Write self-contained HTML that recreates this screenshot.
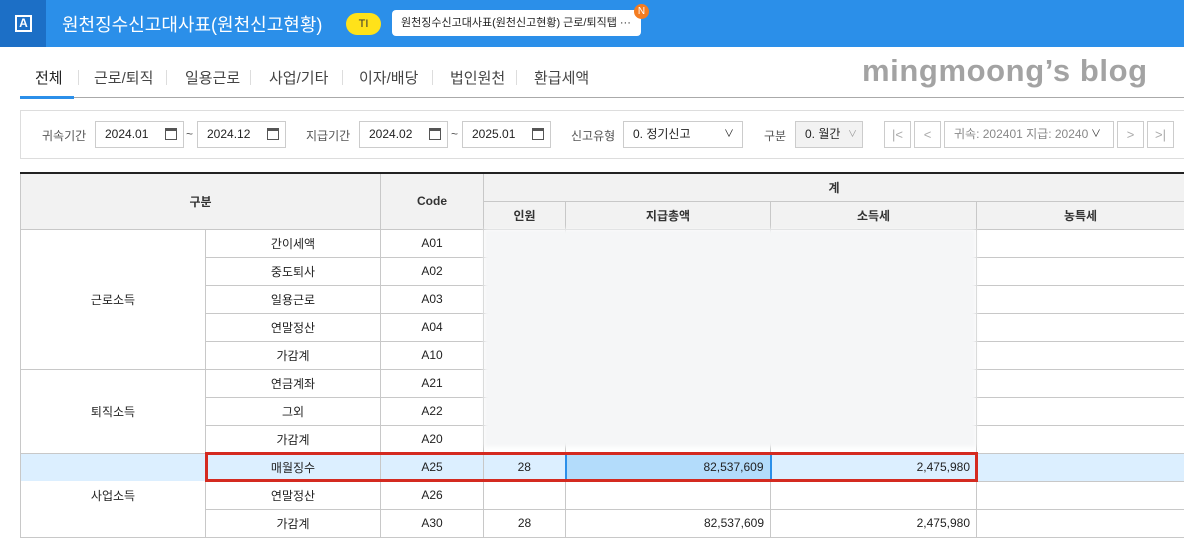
<!DOCTYPE html><html><head><meta charset="utf-8"><style>
*{box-sizing:border-box;margin:0;padding:0}
body{width:1184px;height:537px;overflow:hidden;background:#fff;font-family:"Liberation Sans","Noto Sans CJK KR",sans-serif;position:relative;color:#222}
.hdr{position:absolute;left:0;top:0;width:1184px;height:47px;background:#2b8fe9}
.sq{position:absolute;left:0;top:0;width:46px;height:47px;background:#1c6fc6}
.sq div{position:absolute;left:15px;top:15px;width:17px;height:17px;border:2px solid #fff;color:#fff;font-size:12px;line-height:13px;text-align:center;font-weight:bold}
.title{position:absolute;left:62px;top:11px;color:#fff;font-size:18px}
.ti{position:absolute;left:346px;top:13px;width:35px;height:22px;border-radius:11px;background:#ffe21a;font-size:11px;line-height:22px;text-align:center;color:#333}
.bub{position:absolute;left:392px;top:10px;width:249px;height:26px;background:#fff;border-radius:4px;font-size:11px;line-height:26px;padding-left:9px;color:#222}
.n{position:absolute;left:634px;top:4px;width:15px;height:15px;border-radius:50%;background:#f47c20;color:#fff;font-size:10px;text-align:center;line-height:15px}
.tabs{position:absolute;left:20px;top:60px;font-size:15px;color:#444}
.tabs span{position:absolute;top:7px;white-space:nowrap}
.sep{position:absolute;top:10px;width:1px;height:15px;background:#ddd}
.tline{position:absolute;left:20px;top:97px;width:1164px;height:1px;background:#aaa}
.tact{position:absolute;left:20px;top:96px;width:54px;height:3px;background:#2b8fe9}
.wm{position:absolute;left:862px;top:53px;font-size:31px;font-weight:bold;color:#a3a3a3;letter-spacing:0.6px}
.fb{position:absolute;left:20px;top:110px;width:1164px;height:49px;border:1px solid #ddd;border-right:none}
.lab{position:absolute;top:127px;font-size:12px;color:#555}
.inp{position:absolute;top:121px;height:27px;border:1px solid #ccc;font-size:12px;line-height:25px;padding-left:9px;color:#222;background:#fff}
.cal{position:absolute;right:6px;top:6px;width:12px;height:12px;border:1.5px solid #555;border-top-width:3px}
.nb{position:absolute;top:121px;width:27px;height:27px;border:1px solid #ccc;color:#aaa;font-size:13px;text-align:center;line-height:25px}
table{position:absolute;left:20px;top:172px;border-collapse:collapse;table-layout:fixed;width:1164px;border-top:2px solid #222;font-size:12px}
td,th{border:1px solid #c8c8c8;text-align:center;height:28px;padding:0}
th{background:#f2f2f2;font-weight:bold;font-size:12px;color:#333}
td.r{text-align:right;padding-right:6px}
tr.hl td{background:#dcefff}
.blur{position:absolute;left:484px;top:229px;width:492px;height:218px;background:#f5f6f7;filter:blur(2px)}
</style></head><body>
<div class="hdr"><div class="sq"><div>A</div></div><div class="title">원천징수신고대사표(원천신고현황)</div><div class="ti">TI</div><div class="bub">원천징수신고대사표(원천신고현황) 근로/퇴직탭 ···</div><div class="n">N</div></div>
<div class="tabs">
<span style="left:15px;color:#222">전체</span><div class="sep" style="left:58px"></div>
<span style="left:74px">근로/퇴직</span><div class="sep" style="left:146px"></div>
<span style="left:165px">일용근로</span><div class="sep" style="left:230px"></div>
<span style="left:249px">사업/기타</span><div class="sep" style="left:322px"></div>
<span style="left:339px">이자/배당</span><div class="sep" style="left:412px"></div>
<span style="left:430px">법인원천</span><div class="sep" style="left:496px"></div>
<span style="left:514px">환급세액</span></div>
<div class="tline"></div><div class="tact"></div>
<div class="wm">mingmoong’s blog</div>
<div class="fb"></div>
<div class="lab" style="left:42px">귀속기간</div>
<div class="inp" style="left:95px;width:89px">2024.01<div class="cal"></div></div>
<div class="lab" style="left:186px">~</div>
<div class="inp" style="left:197px;width:89px">2024.12<div class="cal"></div></div>
<div class="lab" style="left:306px">지급기간</div>
<div class="inp" style="left:359px;width:89px">2024.02<div class="cal"></div></div>
<div class="lab" style="left:451px">~</div>
<div class="inp" style="left:462px;width:89px">2025.01<div class="cal"></div></div>
<div class="lab" style="left:571px">신고유형</div>
<div class="inp" style="left:623px;width:120px">0. 정기신고<span style="position:absolute;right:8px;font-size:10px">∨</span></div>
<div class="lab" style="left:764px">구분</div>
<div class="inp" style="left:795px;width:68px;background:#f2f2f2">0. 월간<span style="position:absolute;right:5px;font-size:9px;color:#999">∨</span></div>
<div class="nb" style="left:884px">|&lt;</div><div class="nb" style="left:914px">&lt;</div>
<div class="inp" style="left:944px;width:170px;color:#888;overflow:hidden;white-space:nowrap">귀속: 202401 지급: 20240<span style="position:absolute;right:0;background:#fff;width:22px;color:#333;font-size:10px">∨</span></div>
<div class="nb" style="left:1117px">&gt;</div><div class="nb" style="left:1147px">&gt;|</div>
<table>
<colgroup><col style="width:185px"><col style="width:175px"><col style="width:103px"><col style="width:82px"><col style="width:205px"><col style="width:206px"><col style="width:208px"></colgroup>
<tr><th colspan="2" rowspan="2">구분</th><th rowspan="2">Code</th><th colspan="4">계</th></tr>
<tr><th>인원</th><th>지급총액</th><th>소득세</th><th>농특세</th></tr>
<tr><td rowspan="5">근로소득</td><td>간이세액</td><td>A01</td><td></td><td></td><td></td><td></td></tr>
<tr><td>중도퇴사</td><td>A02</td><td></td><td></td><td></td><td></td></tr>
<tr><td>일용근로</td><td>A03</td><td></td><td></td><td></td><td></td></tr>
<tr><td>연말정산</td><td>A04</td><td></td><td></td><td></td><td></td></tr>
<tr><td>가감계</td><td>A10</td><td></td><td></td><td></td><td></td></tr>
<tr><td rowspan="3">퇴직소득</td><td>연금계좌</td><td>A21</td><td></td><td></td><td></td><td></td></tr>
<tr><td>그외</td><td>A22</td><td></td><td></td><td></td><td></td></tr>
<tr><td>가감계</td><td>A20</td><td></td><td></td><td></td><td></td></tr>
<tr class="hl"><td style="border-bottom:none"></td><td>매월징수</td><td>A25</td><td>28</td><td class="r" style="background:#b3dcfb;border:2px solid #2b8fe9;border-top:1px solid #c8c8c8">82,537,609</td><td class="r">2,475,980</td><td></td></tr>
<tr><td style="border-top:none;border-bottom:none">사업소득</td><td>연말정산</td><td>A26</td><td></td><td></td><td></td><td></td></tr>
<tr><td style="border-top:none"></td><td>가감계</td><td>A30</td><td>28</td><td class="r">82,537,609</td><td class="r">2,475,980</td><td></td></tr>
</table>
<div class="blur"></div>
<div style="position:absolute;left:205px;top:452px;width:773px;height:30px;border:3px solid #d42a20"></div>
</body></html>
